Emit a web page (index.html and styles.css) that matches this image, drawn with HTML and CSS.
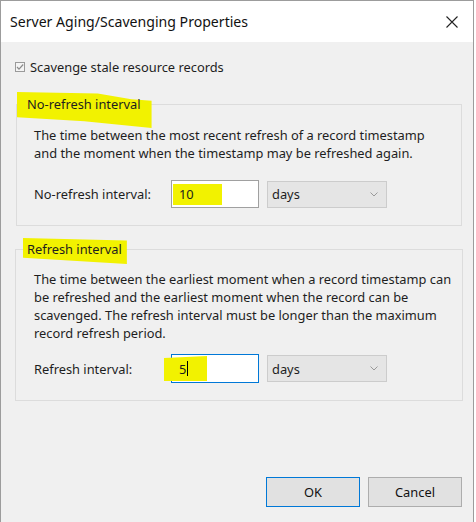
FILE: index.html
```html
<!DOCTYPE html>
<html>
<head>
<meta charset="utf-8">
<link rel="stylesheet" href="styles.css">
</head>
<body>
<div class="window">
  <div class="titlebar">
    <span class="title">Server Aging/Scavenging Properties</span>
    <svg class="close" width="12" height="12" viewBox="0 0 12 12"><path d="M0.5 0.5 L11.5 11.5 M11.5 0.5 L0.5 11.5" stroke="#222" stroke-width="1.1" fill="none"/></svg>
  </div>
  <div class="content">
    <label class="check-row">
      <span class="checkbox"><svg width="10" height="10" viewBox="0 0 10 10"><path d="M2 5 L4 7.2 L8.2 2.5" stroke="#8a8a8a" stroke-width="1.2" fill="none"/></svg></span>
      <span>Scavenge stale resource records</span>
    </label>

    <fieldset class="group group-a">
      <legend class="legend legend-a">No-refresh interval</legend>
      <p class="desc">The time between the most recent refresh of a record timestamp and the moment when the timestamp may be refreshed again.</p>
      <div class="field-row">
        <span class="field-label">No-refresh interval:</span>
        <div class="textbox"><span class="mark mark-a">10</span></div>
        <div class="combo"><span>days</span><svg width="8" height="5" viewBox="0 0 8 5"><path d="M0.5 0.5 L4 4 L7.5 0.5" stroke="#999" stroke-width="1" fill="none"/></svg></div>
      </div>
    </fieldset>

    <fieldset class="group group-b">
      <legend class="legend legend-b">Refresh interval</legend>
      <p class="desc">The time between the earliest moment when a record timestamp can be refreshed and the earliest moment when the record can be scavenged. The refresh interval must be longer than the maximum record refresh period.</p>
      <div class="field-row">
        <span class="field-label">Refresh interval:</span>
        <div class="textbox focused"><span class="mark mark-b">5<span class="caret"></span></span></div>
        <div class="combo"><span>days</span><svg width="8" height="5" viewBox="0 0 8 5"><path d="M0.5 0.5 L4 4 L7.5 0.5" stroke="#999" stroke-width="1" fill="none"/></svg></div>
      </div>
    </fieldset>

    <div class="buttons">
      <button class="btn default">OK</button>
      <button class="btn">Cancel</button>
    </div>
  </div>
</div>
</body>
</html>
```
FILE: styles.css
```css
html, body {
  margin: 0;
  padding: 0;
  background: #ffffff;
}
body {
  font-family: "Noto Sans", "Open Sans", sans-serif;
  font-size: 12.85px;
  color: #1e1e1e;
}
.window {
  width: 472px;
  height: 521px;
  border: 1px solid #9c9c9c;
  border-bottom: none;
  display: flex;
  flex-direction: column;
  background: #f0f0f0;
}
.titlebar {
  height: 41px;
  background: #ffffff;
  display: flex;
  align-items: center;
  justify-content: space-between;
  padding: 0 15px 0 9px;
  flex: none;
}
.title {
  font-size: 14.1px;
  color: #111;
}
.close {
  display: block;
}
.content {
  flex: 1;
  display: flex;
  flex-direction: column;
  padding: 0 10px 0 14px;
}
.check-row {
  display: flex;
  align-items: center;
  gap: 5px;
  margin-top: 18px;
  height: 14px;
}
.checkbox {
  width: 10px;
  height: 10px;
  box-sizing: border-box;
  border: 1px solid #9a9a9a;
  background: #f4f4f4;
  display: flex;
}
.checkbox svg {
  display: block;
  margin: -1px;
}
.group {
  margin: 0;
  padding: 0 10px 0 18px;
  border: 1px solid #dcdcdc;
  min-width: 0;
}
.group-a {
  margin: 23px 0 0 1px;
  width: 446px;
  box-sizing: border-box;
  padding-left: 17px;
  padding-bottom: 17px;
}
.group-b {
  margin: 16px 0 0 0;
  width: 448px;
  box-sizing: border-box;
  padding-bottom: 17px;
}
.legend {
  padding: 0;
  position: relative;
  z-index: 0;
  line-height: 14px;
}
.legend-a {
  margin-left: -7px;
}
.legend-b {
  margin-left: -7px;
}
.legend::before {
  content: "";
  position: absolute;
  z-index: -1;
  background: #f2f200;
}
.legend-a::before {
  left: -10px;
  right: -11px;
  top: -5px;
  bottom: -17px;
  clip-path: polygon(0 0, 60% 4%, 85% 20%, 100% 24%, 100% 100%, 50% 81%, 0 70%);
}
.legend-b::before {
  left: -4px;
  right: -5px;
  top: -4px;
  bottom: -8px;
  clip-path: polygon(0 0, 100% 10%, 100% 100%, 0 76%);
}
.desc {
  margin: 0;
  line-height: 18px;
}
.group-a .desc { margin-top: 15px; }
.group-b .desc { margin-top: 14px; }
.field-row {
  display: flex;
  align-items: center;
  margin-top: 18px;
}
.group-b .field-row { margin-top: 12px; }
.field-label {
  width: 137px;
  flex: none;
}
.textbox {
  width: 88px;
  height: 28px;
  box-sizing: border-box;
  border: 1px solid #a0a0a0;
  background: #fff;
  display: flex;
  align-items: center;
  flex: none;
}
.textbox.focused {
  border-color: #0078d7;
  height: 29px;
}
.mark {
  background: #f2f200;
  display: flex;
  align-items: center;
}
.mark-a {
  margin-left: 1px;
  height: 21px;
  padding: 0 28px 0 6px;
}
.mark-b {
  margin-left: -8px;
  height: 25px;
  padding: 0 19px 0 15px;
  clip-path: polygon(0 8%, 100% 0, 100% 100%, 0 100%);
}
.caret {
  width: 1px;
  height: 15px;
  background: #000;
  margin-left: 1px;
}
.combo {
  margin-left: 8px;
  width: 120px;
  height: 27px;
  box-sizing: border-box;
  border: 1px solid #cccccc;
  background: #e5e5e5;
  display: flex;
  align-items: center;
  justify-content: space-between;
  padding: 0 8px 0 4px;
  flex: none;
}
.combo svg { display: block; }
.buttons {
  margin-top: auto;
  display: flex;
  justify-content: flex-end;
  gap: 8px;
  padding: 0 1px 15px 0;
}
.btn {
  font: inherit;
  color: #111;
  width: 94px;
  height: 30px;
  box-sizing: border-box;
  border: 1px solid #adadad;
  background: #e1e1e1;
  padding: 0;
  margin: 0;
}
.btn.default {
  border-color: #0078d7;
}
```
